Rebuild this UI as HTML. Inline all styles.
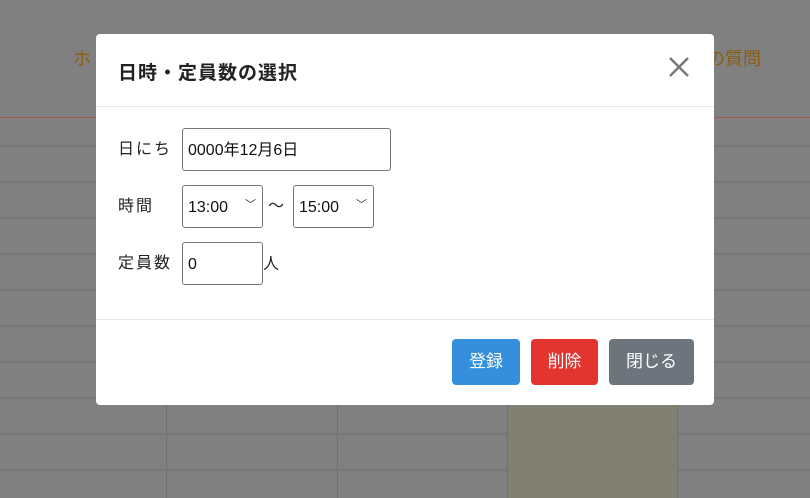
<!DOCTYPE html>
<html><head><meta charset="utf-8"><style>
body{margin:0;width:810px;height:498px;position:relative;overflow:hidden;background:#808080;font-family:"Liberation Sans","Noto Sans CJK JP",sans-serif;}
.hl{position:absolute;left:0;width:810px;height:2px;background:#767676}
.vl{position:absolute;top:398px;width:1px;height:100px;background:#727272}
.nav{position:absolute;top:45px;color:#8a5e10;font-size:18px}
.modal{position:absolute;left:96px;top:34px;width:618px;height:371px;background:#fff;border-radius:4px}
.title{position:absolute;left:22px;top:24px;font-size:19px;font-weight:bold;color:#222;letter-spacing:1px}
.x{position:absolute;left:572px;top:22px}
.sep{position:absolute;left:0;width:618px;height:1px;background:#e8e8e8}
.lbl{position:absolute;left:22px;font-size:16px;color:#222;letter-spacing:2px;line-height:20px}
.box{position:absolute;border:1px solid #777;border-radius:3px;height:43px;box-sizing:border-box;font-size:16px;color:#111;padding-left:5px;line-height:43px}
.chev{position:absolute;right:6px;top:-2px;font-size:11px;color:#333}
.btn{position:absolute;top:305px;height:46px;border-radius:4px;color:#fff;font-size:17px;text-align:center;line-height:46px}
</style></head><body>
<div class="nav" style="left:73px">ホ</div>
<div class="nav" style="left:707px">の質問</div>
<div class="hl" style="top:117px;height:1px;background:#a0584a"></div>
<div class="hl" style="top:145px"></div><div class="hl" style="top:181px"></div><div class="hl" style="top:217px"></div><div class="hl" style="top:253px"></div><div class="hl" style="top:289px"></div><div class="hl" style="top:325px"></div><div class="hl" style="top:361px"></div><div class="hl" style="top:397px"></div><div class="hl" style="top:433px"></div><div class="hl" style="top:469px"></div>
<div style="position:absolute;left:507px;top:398px;width:170px;height:100px;background:#828070"></div>
<div class="vl" style="left:166px"></div><div class="vl" style="left:337px"></div><div class="vl" style="left:507px"></div><div class="vl" style="left:677px"></div>
<div class="modal">
<div class="title">日時・定員数の選択</div>
<svg class="x" width="22" height="22" viewBox="0 0 22 22"><path d="M2 2L20 20M20 2L2 20" stroke="#777" stroke-width="2.4"/></svg>
<div class="sep" style="top:72px"></div>
<div class="lbl" style="top:106px">日にち</div>
<div class="box" style="left:86px;top:94px;width:209px">0000年12月6日</div>
<div class="lbl" style="top:163px">時間</div>
<div class="box" style="left:86px;top:151px;width:81px">13:00<span class="chev">﹀</span></div>
<div class="lbl" style="left:172px;top:163px">〜</div>
<div class="box" style="left:197px;top:151px;width:81px">15:00<span class="chev">﹀</span></div>
<div class="lbl" style="top:220px">定員数</div>
<div class="box" style="left:86px;top:208px;width:81px">0</div>
<div class="lbl" style="left:167px;top:221px">人</div>
<div class="sep" style="top:285px"></div>
<div class="btn" style="left:356px;width:68px;background:#3490dc">登録</div>
<div class="btn" style="left:435px;width:67px;background:#e3342f">削除</div>
<div class="btn" style="left:513px;width:85px;background:#6c757d">閉じる</div>
</div>
</body></html>
